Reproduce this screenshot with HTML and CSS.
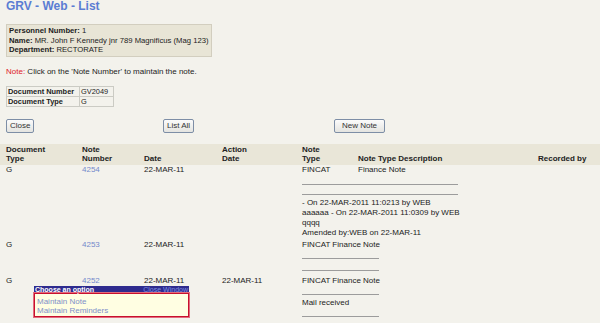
FILE: index.html
```html
<!DOCTYPE html>
<html>
<head>
    <meta charset="UTF-8">
    <title>GRV - Web - List</title>
    <link rel="stylesheet" href="styles.css">
</head>
<body>
  <div class="page">
      <h1 class="title">GRV - Web - List</h1>

      <div class="person">
          <div><b>Personnel Number:</b> 1</div>
          <div><b>Name:</b> MR. John F Kennedy jnr 789 Magnificus (Mag 123)</div>
          <div><b>Department:</b> RECTORATE</div>
      </div>

      <p class="hint"><span class="red">Note:</span> Click on the 'Note Number' to maintain the note.</p>

      <table class="doc">
          <tr><th>Document Number</th><td>GV2049</td></tr>
          <tr><th>Document Type</th><td>G</td></tr>
      </table>

      <div class="buttons">
          <div><button class="btn">Close</button></div>
          <div><button class="btn">List All</button></div>
          <div><button class="btn new">New Note</button></div>
      </div>
  </div>

  <div class="list">
      <div class="head">
          <div>Document<br>Type</div>
          <div>Note<br>Number</div>
          <div>Date</div>
          <div>Action<br>Date</div>
          <div>Note<br>Type</div>
          <div>Note Type Description</div>
          <div>Recorded by</div>
      </div>

      <div class="row">
          <div>G</div>
          <div><a class="link" href="#">4254</a></div>
          <div>22-MAR-11</div>
          <div></div>
          <div class="note">
              <div class="note-title"><span class="ntype">FINCAT</span>Finance Note</div>
              <div class="rule wide first"></div>
              <div class="rule wide"></div>
              <div class="text">
                  - On 22-MAR-2011 11:0213 by WEB<br>
                  aaaaaa - On 22-MAR-2011 11:0309 by WEB<br>
                  qqqq<br>
                  Amended by:WEB on 22-MAR-11
              </div>
          </div>
      </div>

      <div class="row">
          <div>G</div>
          <div><a class="link" href="#">4253</a></div>
          <div>22-MAR-11</div>
          <div></div>
          <div class="note">
              <div class="note-title">FINCAT Finance Note</div>
              <div class="rule"></div>
              <div class="rule"></div>
          </div>
      </div>

      <div class="row">
          <div>G</div>
          <div class="popwrap">
              <a class="link" href="#">4252</a>
              <div class="popup">
                  <div class="pop-head"><span>Choose an option</span><a href="#" class="pop-close">Close Window</a></div>
                  <div class="pop-body">
                      <a href="#">Maintain Note</a>
                      <a href="#">Maintain Reminders</a>
                  </div>
              </div>
          </div>
          <div>22-MAR-11</div>
          <div>22-MAR-11</div>
          <div class="note">
              <div class="note-title">FINCAT Finance Note</div>
              <div class="rule"></div>
              <div class="text">Mail received</div>
              <div class="rule"></div>
          </div>
      </div>
  </div>
</body>
</html>
```

FILE: styles.css
```css
body {
  margin: 0;
  background-color: #f3f2ec;
  font-family: "Liberation Sans", Arial, sans-serif;
  font-size: 8px;
  color: #222;
  overflow: hidden;
}
.page {
  padding: 0 6px;
}
.title {
  margin: 0;
  font-size: 12px;
  line-height: 12px;
  color: #5b7dd3;
}
.person {
  display: inline-block;
  margin-top: 12px;
  padding: 1px 2px;
  font-size: 7.7px;
  line-height: 9.5px;
  white-space: nowrap;
  background-color: #e8e5d6;
  border: 1px solid #d2cebf;
}
.hint {
  margin: 10px 0 0;
  line-height: 10px;
}
.red {
  color: #e0202a;
}
.doc {
  margin-top: 9px;
  border-collapse: collapse;
  font-size: 7.4px;
}
.doc th, .doc td {
  border: 1px solid #cbcbc4;
  padding: 0 1px;
  line-height: 9px;
  text-align: left;
  white-space: nowrap;
}
.doc th {
  width: 70px;
}
.doc td {
  width: 31px;
}
.buttons {
  display: grid;
  grid-template-columns: 157px 171px auto;
  margin-top: 12px;
}
.btn {
  font-family: "Liberation Sans", Arial, sans-serif;
  font-size: 8px;
  height: 14px;
  padding: 0 3px;
  white-space: nowrap;
  color: #333;
  background: linear-gradient(#fbfbfb, #e4e4e0);
  border: 1px solid #7d8ea6;
  border-radius: 2px;
}
.btn.new {
  width: 51px;
}

.list {
  margin-top: 11px;
}
.head, .row {
  display: grid;
  grid-template-columns: 76px 62px 78px 80px 56px 180px auto;
  padding-left: 6px;
  white-space: nowrap;
}
.head {
  background-color: #e9e6d8;
  padding-top: 1px;
  padding-bottom: 2px;
  font-weight: bold;
  line-height: 9px;
  align-items: end;
}
.row {
  line-height: 10px;
  padding-bottom: 2px;
}
.note {
  grid-column: 5 / 8;
  display: flex;
  flex-direction: column;
  align-items: flex-start;
}
.ntype {
  display: inline-block;
  width: 56px;
}
.rule {
  width: 77px;
  height: 0;
  border-top: 1px solid #9c9c9c;
  margin: 8px 0 3px;
}
.rule.wide {
  width: 156px;
}
.rule.first {
  margin-top: 9px;
  margin-bottom: 1px;
}
.link {
  color: #7489cb;
  text-decoration: none;
}

.popwrap {
  position: relative;
}
.popup {
  position: absolute;
  left: -48px;
  top: 10px;
  width: 155px;
  z-index: 2;
}
.pop-head {
  display: flex;
  justify-content: space-between;
  height: 7px;
  line-height: 7px;
  font-size: 7px;
  font-weight: bold;
  color: #fff;
  background-color: #2e2b8e;
  padding: 0 1px;
}
.pop-close {
  color: #7f8fe0;
  font-weight: normal;
  text-decoration: none;
}
.pop-body {
  display: flex;
  flex-direction: column;
  padding: 3px 2px 1px 2px;
  line-height: 9px;
  background-color: #fffee2;
  border: 1px solid #c8102e;
  outline: 1px solid #e36b7d;
}
.pop-body a {
  color: #7e8fc9;
  text-decoration: none;
}
```
